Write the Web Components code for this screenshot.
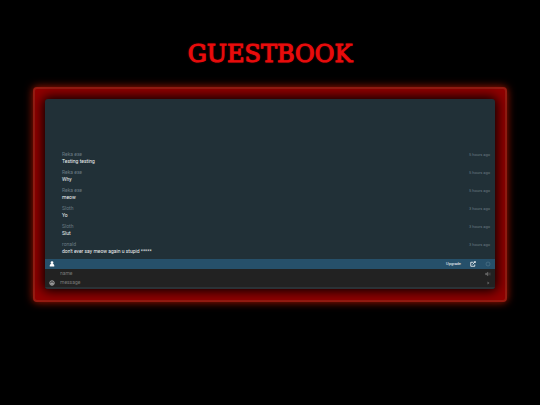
<!DOCTYPE html>
<html lang="en">
<head>
<meta charset="utf-8">
<title>Guestbook</title>
<style>
    body {
        margin: 0;
        background: #000;
        font-family: Roboto, "Liberation Sans", sans-serif;
    }
</style>
</head>
<body>
<guest-book heading="GUESTBOOK">
    <chat-box>
        <chat-message name="Reka exe" time="5 hours ago">Testing testing</chat-message>
        <chat-message name="Reka exe" time="5 hours ago">Why</chat-message>
        <chat-message name="Reka exe" time="5 hours ago">meow</chat-message>
        <chat-message name="Sloth" time="3 hours ago">Yo</chat-message>
        <chat-message name="Sloth" time="3 hours ago">Slut</chat-message>
        <chat-message name="ronald" time="3 hours ago">don't ever say meow again u stupid *****</chat-message>
        <chat-toolbar slot="footer"></chat-toolbar>
        <chat-form slot="footer"></chat-form>
    </chat-box>
</guest-book>

<script>
class GuestBook extends HTMLElement {
    constructor() {
        super();
        this.attachShadow({ mode: 'open' });
        this.shadowRoot.innerHTML = `
            <style>
                :host {
                    display: block;
                    padding: 38px 33px;
                }
                h1 {
                    margin: 0 0 17px;
                    color: #e80c0c;
                    font: 24px/32px "DejaVu Serif", serif;
                    text-align: center;
                    text-shadow: 0 0 2px #b00000;
                    -webkit-text-stroke: 1px #e80c0c;
                }
                .frame {
                    padding: 10px 10px 11px;
                    border: 2px solid #961c12;
                    border-radius: 4px;
                    background: #900000;
                    box-shadow: 0 0 9px #b01800;
                }
            </style>
            <h1></h1>
            <div class="frame"><slot></slot></div>
        `;
    }

    connectedCallback() {
        this.shadowRoot.querySelector('h1').textContent = this.getAttribute('heading');
    }
}

class ChatBox extends HTMLElement {
    constructor() {
        super();
        this.attachShadow({ mode: 'open' });
        this.shadowRoot.innerHTML = `
            <style>
                :host {
                    display: block;
                    overflow: hidden;
                    border-radius: 3px;
                    background: #213037;
                    box-shadow: 0 0 12px 2px #000;
                }
                .messages {
                    display: flex;
                    flex-direction: column;
                    justify-content: flex-end;
                    gap: 4px;
                    min-height: 156px;
                    padding: 0 5px 4px 17px;
                }
            </style>
            <div class="messages"><slot></slot></div>
            <slot name="footer"></slot>
        `;
    }
}

class ChatMessage extends HTMLElement {
    constructor() {
        super();
        this.attachShadow({ mode: 'open' });
        this.shadowRoot.innerHTML = `
            <style>
                :host {
                    display: block;
                    font-size: 5px;
                    line-height: 7px;
                    color: #f0f2f3;
                }
                .head {
                    display: flex;
                    justify-content: space-between;
                    color: #6a7a83;
                }
                time {
                    font-size: 4px;
                }
            </style>
            <div class="head"><span></span><time></time></div>
            <slot></slot>
        `;
    }

    connectedCallback() {
        this.shadowRoot.querySelector('span').textContent = this.getAttribute('name');
        this.shadowRoot.querySelector('time').textContent = this.getAttribute('time');
    }
}

class ChatToolbar extends HTMLElement {
    constructor() {
        super();
        this.attachShadow({ mode: 'open' });
        this.shadowRoot.innerHTML = `
            <style>
                :host {
                    display: flex;
                    align-items: center;
                    gap: 9px;
                    height: 10px;
                    padding: 0 4px;
                    background: #26506a;
                }
                button {
                    display: flex;
                    padding: 0;
                    border: 0;
                    background: none;
                    color: #fff;
                }
                a {
                    margin-left: auto;
                    color: #fff;
                    font-size: 4px;
                    line-height: 10px;
                    text-decoration: none;
                }
                svg {
                    width: 6px;
                    height: 6px;
                }
                .dim {
                    color: #4d7388;
                }
            </style>
            <button aria-label="Profile">
                <svg viewBox="0 0 12 12" fill="currentColor"><circle cx="6" cy="3.4" r="2.8"/><path d="M1.5 11V9.2C1.5 7 3 6 4 6h4c1 0 2.500 1 2.500 3.200V11z"/></svg>
            </button>
            <a href="#">Upgrade</a>
            <button aria-label="Open in new window">
                <svg viewBox="0 0 12 12" fill="none" stroke="currentColor" stroke-width="1.600"><path d="M7 2.500H1.500v8h8V7M5 7l5-5"/><path d="M7.500.5h4v4z" fill="currentColor" stroke="none"/></svg>
            </button>
            <button class="dim" aria-label="Online">
                <svg viewBox="0 0 12 12" fill="none" stroke="currentColor" stroke-width="1.400"><circle cx="6" cy="6" r="4"/></svg>
            </button>
        `;
    }
}

class ChatForm extends HTMLElement {
    constructor() {
        super();
        this.attachShadow({ mode: 'open' });
        this.shadowRoot.innerHTML = `
            <style>
                :host {
                    display: block;
                    border-bottom: 2px solid #2b3236;
                    background: #222;
                }
                form {
                    display: grid;
                    grid-template-columns: 6px 1fr 6px;
                    grid-auto-rows: 9px;
                    column-gap: 5px;
                    align-items: center;
                    padding: 0 4px;
                }
                input {
                    min-width: 0;
                    padding: 0;
                    border: 0;
                    outline: 0;
                    background: none;
                    color: #ddd;
                    font: 5px/9px Roboto, "Liberation Sans", sans-serif;
                }
                input::placeholder {
                    color: #777;
                }
                button {
                    display: flex;
                    padding: 0;
                    border: 0;
                    background: none;
                    color: #666;
                }
                .smile {
                    color: #ccc;
                }
                svg {
                    width: 6px;
                    height: 6px;
                }
            </style>
            <form>
                <span></span>
                <input type="text" placeholder="name" aria-label="name">
                <button type="button" aria-label="Sound">
                    <svg viewBox="0 0 12 12" fill="none" stroke="currentColor"><path d="M1 4.500h2l3-2.500v8L3 7.500H1z" fill="currentColor"/><path d="M8 4v4M10 3v6"/></svg>
                </button>
                <button type="button" class="smile" aria-label="Smilies">
                    <svg viewBox="0 0 12 12" fill="none" stroke="currentColor" stroke-width="1.500"><circle cx="6" cy="6" r="4.500"/><path d="M3.500 6.500c.5 3 4.500 3 5 0zM4 4.500h1M7 4.500h1"/></svg>
                </button>
                <input type="text" placeholder="message" aria-label="message">
                <button type="submit" aria-label="Send">
                    <svg viewBox="0 0 12 12" fill="currentColor"><path d="M5 3l4 3-4 3z"/></svg>
                </button>
            </form>
        `;
    }
}

customElements.define('guest-book', GuestBook);
customElements.define('chat-box', ChatBox);
customElements.define('chat-message', ChatMessage);
customElements.define('chat-toolbar', ChatToolbar);
customElements.define('chat-form', ChatForm);
</script>
</body>
</html>
